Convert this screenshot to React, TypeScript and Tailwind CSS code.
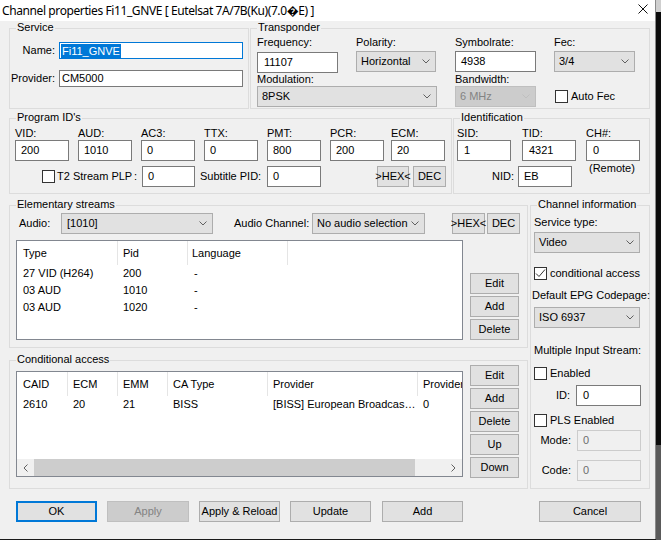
import React from "react";

type Kids = { children?: React.ReactNode };

function Chevron({ disabled }: { disabled?: boolean }) {
  return (
    <svg width="8" height="5" viewBox="0 0 8 5" className="shrink-0">
      <polyline points="0.5,0.5 4,4 7.5,0.5" fill="none" stroke={disabled ? "#bfbfbf" : "#606060"} strokeWidth="1" />
    </svg>
  );
}

function Edit({ value, className = "", pad = "pl-[5px]" }: { value: string; className?: string; pad?: string }) {
  return <div className={`flex items-center shrink-0 bg-white border border-[#7a7a7a] h-[21px] ${pad} ${className}`}>{value}</div>;
}

function DisabledEdit({ value, className = "" }: { value: string; className?: string }) {
  return (
    <div className={`flex items-center shrink-0 bg-[#f0f0f0] border border-[#cccccc] h-[21px] pl-[5px] text-[#6d6d6d] ${className}`}>{value}</div>
  );
}

function Combo({ value, className = "", disabled }: { value: string; className?: string; disabled?: boolean }) {
  return (
    <div
      className={`flex items-center justify-between shrink-0 h-[21px] border pl-[4px] pr-[5px] ${
        disabled ? "bg-[#cccccc] border-[#bfbfbf] text-[#838383]" : "bg-[#e1e1e1] border-[#adadad]"
      } ${className}`}
    >
      <span className="whitespace-nowrap">{value}</span>
      <Chevron disabled={disabled} />
    </div>
  );
}

function Btn({ label, className = "" }: { label: string; className?: string }) {
  return (
    <div className={`flex items-center justify-center shrink-0 h-[21px] bg-[#e1e1e1] border border-[#adadad] whitespace-nowrap ${className}`}>
      {label}
    </div>
  );
}

function Check({ checked }: { checked?: boolean }) {
  return (
    <div className="w-[13px] h-[13px] shrink-0 bg-white border border-[#333333] flex items-center justify-center">
      {checked && (
        <svg width="11" height="11" viewBox="0 0 11 11">
          <polyline points="1,5.5 4,8.5 10,1.5" fill="none" stroke="#333333" strokeWidth="1" />
        </svg>
      )}
    </div>
  );
}

function Group({ label, className = "", children }: Kids & { label: string; className?: string }) {
  return (
    <div className={`relative shrink-0 border border-[#dcdcdc] ${className}`}>
      <span className="absolute left-[6px] top-[-8px] px-[1px] bg-[#f0f0f0] leading-[13px] whitespace-nowrap">{label}</span>
      {children}
    </div>
  );
}

function Field({ label, children, className = "" }: Kids & { label: string; className?: string }) {
  return (
    <div className={`flex flex-col shrink-0 ${className}`}>
      <span className="leading-[13px] whitespace-nowrap">{label}</span>
      {children}
    </div>
  );
}

function ArrowLeft() {
  return (
    <svg width="5" height="8" viewBox="0 0 5 8">
      <polyline points="4.5,0.5 1,4 4.5,7.5" fill="none" stroke="#606060" strokeWidth="1" />
    </svg>
  );
}

function ArrowRight() {
  return (
    <svg width="5" height="8" viewBox="0 0 5 8">
      <polyline points="0.5,0.5 4,4 0.5,7.5" fill="none" stroke="#606060" strokeWidth="1" />
    </svg>
  );
}

const pids = [
  { label: "VID:", value: "200" },
  { label: "AUD:", value: "1010" },
  { label: "AC3:", value: "0" },
  { label: "TTX:", value: "0" },
  { label: "PMT:", value: "800" },
  { label: "PCR:", value: "200" },
  { label: "ECM:", value: "20" },
];

const streams = [
  ["27 VID (H264)", "200", "-"],
  ["03 AUD", "1010", "-"],
  ["03 AUD", "1020", "-"],
];

export default function App() {
  return (
    <div className="w-[661px] h-[540px] flex bg-[#1a1a1a] overflow-hidden font-['Liberation_Sans',Arial,sans-serif] text-[11px] leading-[13px] text-black">
      <div className="w-[656px] h-[539px] shrink-0 flex flex-col bg-[#f0f0f0] border-r border-[#8a8a8a]">
        {/* title bar */}
        <div className="h-[21px] shrink-0 bg-white flex items-center justify-between pl-[2px] pr-[7px]">
          <span className="font-['Noto_Sans',sans-serif] text-[12px] leading-[16px] tracking-[-0.4px] whitespace-nowrap">
            Channel properties Fi11_GNVE [ Eutelsat 7A/7B(Ku)(7.0{"\uFFFD"}E) ]
          </span>
          <svg width="10" height="10" viewBox="0 0 10 10" className="mt-[-3px]">
            <path d="M0.5 0.5 L9.5 9.5 M9.5 0.5 L0.5 9.5" stroke="#111" strokeWidth="1" />
          </svg>
        </div>

        <div className="pl-[9px] pr-[5px] flex flex-col">
          {/* row 1 */}
          <div className="flex mt-[7px]">
            <Group label="Service" className="w-[240px] h-[81px]">
              <div className="pt-[13px] flex items-center">
                <span className="w-[45px] text-right">Name:</span>
                <div className="ml-[4px] w-[184px] h-[17px] border border-[#0078d7] bg-white flex items-center pl-[1px]">
                  <span className="bg-[#0078d7] text-white px-[1px] leading-[14px]">Fi11_GNVE</span>
                </div>
              </div>
              <div className="mt-[11px] flex items-center">
                <span className="w-[45px] text-right">Provider:</span>
                <div className="ml-[4px] w-[184px] h-[17px] border border-[#7a7a7a] bg-white flex items-center pl-[2px]">CM5000</div>
              </div>
            </Group>

            <Group label="Transponder" className="ml-[1px] w-[400px] h-[81px]">
              <div className="pt-[7px] flex">
                <Field label="Frequency:" className="ml-[6px] w-[81px]">
                  <Edit value="11107" pad="pl-[6px]" className="mt-[3px] h-[20px]" />
                </Field>
                <Field label="Polarity:" className="ml-[18px] w-[80px]">
                  <Combo value="Horizontal" className="mt-[2px]" />
                </Field>
                <Field label="Symbolrate:" className="ml-[19px] w-[81px]">
                  <Edit value="4938" className="mt-[2px] h-[21px]" />
                </Field>
                <Field label="Fec:" className="ml-[18px] w-[81px]">
                  <Combo value="3/4" className="mt-[2px]" />
                </Field>
              </div>
              <div className="flex">
                <Field label="Modulation:" className="ml-[6px] w-[180px]">
                  <Combo value="8PSK" className="bg-[#dadada]" />
                </Field>
                <Field label="Bandwidth:" className="ml-[18px] w-[81px]">
                  <Combo value="6 MHz" disabled />
                </Field>
                <div className="ml-[19px] pt-[13px] flex items-center">
                  <Check />
                  <span className="ml-[3px]">Auto Fec</span>
                </div>
              </div>
            </Group>
          </div>

          {/* row 2 */}
          <div className="flex mt-[9px]">
            <Group label="Program ID's" className="w-[443px] h-[76px]">
              <div className="pt-[8px] pl-[5px] flex gap-[9px]">
                {pids.map((p, i) => (
                  <Field key={p.label} label={p.label} className={i === 6 ? "w-[54px] ml-[-2px]" : "w-[54px]"}>
                    <Edit value={p.value} pad="pl-[5px]" />
                  </Field>
                ))}
              </div>
              <div className="mt-[5px] flex items-center h-[21px]">
                <div className="ml-[32px]">
                  <Check />
                </div>
                <span className="ml-[2px] w-[77px] whitespace-nowrap">T2 Stream PLP</span>
                <span className="w-[8px]">:</span>
                <Edit value="0" className="w-[53px]" />
                <span className="ml-[5px] w-[67px] whitespace-nowrap">Subtitle PID:</span>
                <Edit value="0" className="w-[54px]" />
                <Btn label=">HEX<" className="ml-[56px] w-[32px] h-[20px]" />
                <Btn label="DEC" className="ml-[4px] w-[33px] h-[20px]" />
              </div>
            </Group>

            <Group label="Identification" className="ml-[1px] w-[197px] h-[76px]">
              <div className="pt-[8px] flex">
                <Field label="SID:" className="ml-[3px] w-[54px]">
                  <Edit value="1" pad="pl-[6px]" />
                </Field>
                <Field label="TID:" className="ml-[11px] w-[54px]">
                  <Edit value="4321" pad="pl-[6px]" />
                </Field>
                <Field label="CH#:" className="ml-[10px] w-[54px]">
                  <Edit value="0" pad="pl-[6px]" />
                </Field>
              </div>
              <div className="flex items-start">
                <div className="mt-[5px] flex items-center">
                  <span className="w-[64px] pr-[4px] text-right">NID:</span>
                  <Edit value="EB" pad="pl-[5px]" className="w-[54px]" />
                </div>
                <span className="ml-[10px] mt-[1px] pl-[7px] whitespace-nowrap">(Remote)</span>
              </div>
            </Group>
          </div>

          {/* row 3 */}
          <div className="flex mt-[11px]">
            <div className="w-[519px] shrink-0 flex flex-col">
              <Group label="Elementary streams" className="h-[143px]">
                <div className="mt-[7px] flex items-center h-[21px]">
                  <span className="ml-[9px] w-[42px] shrink-0">Audio:</span>
                  <Combo value="[1010]" className="w-[152px] pl-[5px]" />
                  <span className="ml-[21px] w-[78px] shrink-0 whitespace-nowrap">Audio Channel:</span>
                  <Combo value="No audio selection" className="w-[113px] pl-[3px]" />
                  <Btn label=">HEX<" className="ml-[27px] w-[33px] h-[21px]" />
                  <Btn label="DEC" className="ml-[2px] w-[33px] h-[21px]" />
                </div>
                <div className="mt-[6px] flex items-end">
                  <div className="ml-[6px] w-[447px] h-[100px] shrink-0 border border-[#828790] bg-white overflow-hidden">
                    <div className="flex h-[24px]">
                      <div className="w-[101px] pl-[6px] flex items-center border-r border-[#e5e5e5]">Type</div>
                      <div className="w-[70px] pl-[5px] flex items-center border-r border-[#e5e5e5]">Pid</div>
                      <div className="w-[100px] pl-[4px] flex items-center border-r border-[#e5e5e5]">Language</div>
                    </div>
                    {streams.map((r, i) => (
                      <div key={i} className="flex h-[17px] items-center">
                        <div className="w-[101px] pl-[6px]">{r[0]}</div>
                        <div className="w-[70px] pl-[5px]">{r[1]}</div>
                        <div className="w-[100px] pl-[6px]">{r[2]}</div>
                      </div>
                    ))}
                  </div>
                  <div className="ml-[7px] w-[49px] flex flex-col gap-[2px]">
                    <Btn label="Edit" />
                    <Btn label="Add" />
                    <Btn label="Delete" />
                  </div>
                </div>
              </Group>

              <Group label="Conditional access" className="mt-[12px] h-[129px]">
                <div className="flex items-start">
                  <div className="ml-[6px] mt-[10px] w-[447px] h-[106px] shrink-0 border border-[#828790] bg-white overflow-hidden flex flex-col">
                    <div className="flex h-[24px] shrink-0">
                      <div className="w-[51px] shrink-0 pl-[6px] flex items-center border-r border-[#e5e5e5]">CAID</div>
                      <div className="w-[50px] shrink-0 pl-[5px] flex items-center border-r border-[#e5e5e5]">ECM</div>
                      <div className="w-[50px] shrink-0 pl-[5px] flex items-center border-r border-[#e5e5e5]">EMM</div>
                      <div className="w-[100px] shrink-0 pl-[5px] flex items-center border-r border-[#e5e5e5]">CA Type</div>
                      <div className="w-[150px] shrink-0 pl-[5px] flex items-center border-r border-[#e5e5e5]">Provider</div>
                      <div className="w-[100px] shrink-0 pl-[5px] flex items-center whitespace-nowrap">Provider ID</div>
                    </div>
                    <div className="flex h-[17px] items-center shrink-0">
                      <div className="w-[51px] shrink-0 pl-[6px]">2610</div>
                      <div className="w-[50px] shrink-0 pl-[5px]">20</div>
                      <div className="w-[50px] shrink-0 pl-[5px]">21</div>
                      <div className="w-[100px] shrink-0 pl-[5px]">BISS</div>
                      <div className="w-[150px] shrink-0 pl-[5px] whitespace-nowrap">[BISS] European Broadcas…</div>
                      <div className="w-[100px] shrink-0 pl-[5px]">0</div>
                    </div>
                    <div className="flex-1" />
                    <div className="h-[17px] shrink-0 flex items-center bg-[#f0f0f0]">
                      <div className="w-[17px] h-full flex items-center justify-center">
                        <ArrowLeft />
                      </div>
                      <div className="w-[381px] h-full bg-[#cdcdcd]" />
                      <div className="flex-1" />
                      <div className="w-[17px] h-full flex items-center justify-center">
                        <ArrowRight />
                      </div>
                    </div>
                  </div>
                  <div className="ml-[7px] mt-[4px] w-[49px] flex flex-col gap-[2px]">
                    <Btn label="Edit" />
                    <Btn label="Add" />
                    <Btn label="Delete" />
                    <Btn label="Up" />
                    <Btn label="Down" />
                  </div>
                </div>
              </Group>
            </div>

            <Group label="Channel information" className="ml-[2px] w-[120px] h-[284px]">
              <div className="pl-[3px] pr-[8px] flex flex-col">
                <span className="mt-[10px]">Service type:</span>
                <Combo value="Video" className="mt-[3px] w-[106px]" />
                <div className="mt-[14px] flex items-center">
                  <Check checked />
                  <span className="ml-[3px] whitespace-nowrap">conditional access</span>
                </div>
                <span className="mt-[9px] ml-[-2px] whitespace-nowrap">Default EPG Codepage:</span>
                <Combo value="ISO 6937" className="mt-[5px] w-[106px]" />
                <span className="mt-[16px] whitespace-nowrap">Multiple Input Stream:</span>
                <div className="mt-[10px] flex items-center">
                  <Check />
                  <span className="ml-[3px]">Enabled</span>
                </div>
                <div className="mt-[5px] flex items-center">
                  <span className="w-[38px] text-right">ID:</span>
                  <Edit value="0" pad="pl-[6px]" className="ml-[6px] w-[65px]" />
                </div>
                <div className="mt-[8px] flex items-center">
                  <Check />
                  <span className="ml-[3px] whitespace-nowrap">PLS Enabled</span>
                </div>
                <div className="mt-[3px] flex items-center">
                  <span className="w-[38px] text-right">Mode:</span>
                  <DisabledEdit value="0" className="ml-[6px] w-[64px]" />
                </div>
                <div className="mt-[9px] flex items-center">
                  <span className="w-[38px] text-right">Code:</span>
                  <DisabledEdit value="0" className="ml-[6px] w-[64px]" />
                </div>
              </div>
            </Group>
          </div>

          {/* buttons */}
          <div className="mt-[12px] flex">
            <div className="ml-[7px] w-[81px] h-[21px] flex items-center justify-center bg-[#e1e1e1] border-2 border-[#0078d7]">OK</div>
            <div className="ml-[10px] w-[82px] h-[21px] flex items-center justify-center bg-[#cccccc] border border-[#bfbfbf] text-[#838383]">
              Apply
            </div>
            <Btn label="Apply & Reload" className="ml-[10px] w-[81px]" />
            <Btn label="Update" className="ml-[10px] w-[81px]" />
            <Btn label="Add" className="ml-[11px] w-[81px]" />
            <Btn label="Cancel" className="ml-[76px] w-[102px]" />
          </div>
        </div>
      </div>
      <div className="flex-1 flex flex-col">
        <div className="h-[12px] bg-[#cfcfcf]" />
        <div className="h-[433px] bg-[#0c0c0c]" />
        <div className="flex-1 bg-[#5a5a5a]" />
      </div>
    </div>
  );
}
